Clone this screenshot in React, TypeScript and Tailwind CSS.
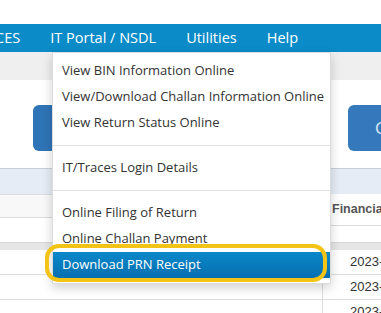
import React from "react";

const navItems = ["TRACES", "IT Portal / NSDL", "Utilities", "Help"];

const menuGroups: string[][] = [
    ["View BIN Information Online", "View/Download Challan Information Online", "View Return Status Online"],
    ["IT/Traces Login Details"],
    ["Online Filing of Return", "Online Challan Payment"],
];

const App: React.FC = () => {
    return (
        <div className="relative w-[381px] h-[313px] overflow-hidden bg-white" style={{ fontFamily: '"Open Sans", "Noto Sans", sans-serif' }}>
            <div className="h-6" />
            {/* top nav */}
            <div className="h-[28px] bg-[#0b8bc7] flex items-center gap-[30px] text-white text-[14.5px] whitespace-nowrap overflow-hidden">
                <span className="-ml-[31px]">{navItems[0]}</span>
                {navItems.slice(1).map((item) => (
                    <span key={item}>{item}</span>
                ))}
            </div>
            <div className="h-[28px] bg-[#efefef]" />

            {/* buttons row */}
            <div className="flex pt-[25px] h-[88px] overflow-hidden">
                <div className="ml-[33px] w-[140px] h-[46px] shrink-0 rounded-[6px] bg-[#2f74b6]" />
                <div className="ml-[175px] w-[140px] h-[46px] shrink-0 rounded-[6px] bg-[#3578bb] flex items-center pl-[27px] text-[17px] text-[#dbe9f7]">
                    Challan
                </div>
            </div>

            {/* table */}
            <div className="text-[13px]" style={{ fontFamily: '"Liberation Sans", Arial, sans-serif' }}>
                <div className="h-[26px] bg-[#e5ecf5] border-t border-[#c9ced6]" />
                <div className="flex">
                    <div className="w-[331px] shrink-0">
                        <div className="h-[24px] bg-[#f8f8f8] border-y border-[#dcdcdc]" />
                        <div className="h-[24px]" />
                    </div>
                    <div className="flex-1">
                        <div className="h-[32px] border-b border-[#dcdcdc] flex items-center pl-px font-bold text-[#555] text-[12.5px]">Financial</div>
                        <div className="h-[16px]" />
                    </div>
                </div>
                <div className="h-[8px] bg-[#e6e6e6] border-t border-[#d6d6d6]" />
                {[0, 1, 2].map((i) => (
                    <div key={i} className="flex h-[25px] border-b border-[#dddddd]">
                        <div className="w-[323px] shrink-0 border-r border-[#dddddd]" />
                        <div className="pl-[27px] flex items-center text-[#333]">2023-</div>
                    </div>
                ))}
            </div>

            {/* dropdown */}
            <div className="absolute left-[52px] top-[52px] w-[279px] bg-white border border-[#dcdcdc] shadow-[0_4px_10px_rgba(0,0,0,0.18)] py-[5px] text-[13px] text-[#333]">
                {menuGroups.map((group, gi) => (
                    <div key={gi}>
                        {gi > 0 && <div className="my-[9px] border-t border-[#e2e2e2]" />}
                        {group.map((label) => (
                            <div key={label} className="h-[26px] flex items-center pl-[9px] whitespace-nowrap">
                                {label}
                            </div>
                        ))}
                    </div>
                ))}
                <div className="h-[26px] flex items-center pl-[9px] whitespace-nowrap text-white bg-gradient-to-b from-[#0b88c9] to-[#066fb0]">
                    Download PRN Receipt
                </div>
                <div className="absolute left-[-8px] top-[191px] w-[282px] h-[38px] rounded-[14px] border-[4px] border-[#f3c315]" />
            </div>
        </div>
    );
};

export default App;
